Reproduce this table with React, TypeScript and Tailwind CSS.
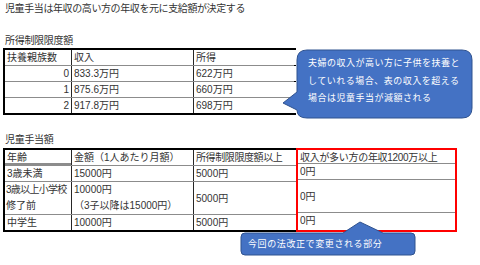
import { Fragment } from "react"

const font = "font-['Liberation_Sans','Noto_Sans_CJK_JP',sans-serif]"

const limits = [
  { n: "0", income: "833.3万円", shotoku: "622万円" },
  { n: "1", income: "875.6万円", shotoku: "660万円" },
  { n: "2", income: "917.8万円", shotoku: "698万円" },
]

function Cell({ children, className = "" }: { children?: React.ReactNode; className?: string }) {
  return <div className={`px-[2px] leading-[15px] whitespace-nowrap ${className}`}>{children}</div>
}

function LimitTable() {
  return (
    <div className="w-[293px] border-2 border-black bg-white">
      <div className="grid grid-cols-[66px_1px_121px_1px_102px] bg-[#8c8c8c] gap-y-px">
        <Cell className="bg-white h-[15px]">扶養親族数</Cell>
        <div className="bg-[#262626]" />
        <Cell className="bg-white">収入</Cell>
        <div className="bg-[#262626]" />
        <Cell className="bg-white">所得</Cell>
        {limits.map((r) => (
          <Fragment key={r.n}>
            <Cell className="bg-white h-[15px] text-right">{r.n}</Cell>
            <div className="bg-[#262626]" />
            <Cell className="bg-white">{r.income}</Cell>
            <div className="bg-[#262626]" />
            <Cell className="bg-white">{r.shotoku}</Cell>
          </Fragment>
        ))}
      </div>
    </div>
  )
}

function AllowanceTable() {
  const rowH = ["h-[13px]", "h-[15px]", "h-[32px]", "h-[15px]"]
  return (
    <div className="flex">
      <div className="w-[293px] border-2 border-r-0 border-black">
        <div className="grid grid-cols-[66px_1px_121px_1px_102px] bg-[#8c8c8c] gap-y-px">
          <Cell className={`bg-white ${rowH[0]} leading-[13px]`}>年齢</Cell>
          <div className="bg-[#262626]" />
          <Cell className="bg-white leading-[13px]">金額（1人あたり月額）</Cell>
          <div className="bg-[#262626]" />
          <Cell className="bg-white leading-[13px] tracking-[-0.4px]">所得制限限度額以上</Cell>

          <Cell className={`bg-white ${rowH[1]}`}>3歳未満</Cell>
          <div className="bg-[#262626]" />
          <Cell className="bg-white">15000円</Cell>
          <div className="bg-[#262626]" />
          <Cell className="bg-white">5000円</Cell>

          <div className={`bg-white ${rowH[2]} px-[1px] leading-[16px] whitespace-nowrap`}>
            <div className="tracking-[-0.7px]">3歳以上小学校</div>
            <div>修了前</div>
          </div>
          <div className="bg-[#262626]" />
          <div className="bg-white px-[2px] leading-[16px] whitespace-nowrap">
            <div>10000円</div>
            <div>（3子以降は15000円）</div>
          </div>
          <div className="bg-[#262626]" />
          <Cell className="bg-white flex items-center">5000円</Cell>

          <Cell className={`bg-white ${rowH[3]}`}>中学生</Cell>
          <div className="bg-[#262626]" />
          <Cell className="bg-white">10000円</Cell>
          <div className="bg-[#262626]" />
          <Cell className="bg-white">5000円</Cell>
        </div>
      </div>
      <div className="w-[161px] border-2 border-[#ff0000]">
        <div className="flex flex-col gap-y-px bg-[#8c8c8c]">
          <Cell className={`bg-white ${rowH[0]} leading-[13px] tracking-[-0.3px]`}>収入が多い方の年収1200万以上</Cell>
          <Cell className={`bg-white ${rowH[1]}`}>0円</Cell>
          <Cell className={`bg-white ${rowH[2]} flex items-center`}>0円</Cell>
          <Cell className={`bg-white ${rowH[3]}`}>0円</Cell>
        </div>
      </div>
    </div>
  )
}

export default function App() {
  return (
    <div className={`relative w-[480px] h-[265px] overflow-hidden bg-white text-[10px] text-[#333] ${font}`}>
      <div className="pl-[3px] pt-[2px]">
        <div className="h-[32px] pl-[2px] leading-[14px] tracking-[-0.4px]">
          児童手当は年収の高い方の年収を元に支給額が決定する
        </div>
        <div className="h-[14px] pl-[2px] leading-[14px] tracking-[-0.3px]">所得制限限度額</div>
        <LimitTable />
        <div className="mt-[18px] h-[15px] pl-[2px] leading-[14px] tracking-[-0.3px]">児童手当額</div>
        <AllowanceTable />
      </div>

      <div className="absolute left-[280px] top-[48px] w-[195px] h-[72px]">
        <svg width="195" height="72" className="absolute inset-0">
          <path
            d="M27 2H182Q192 2 192 12V60Q192 70 182 70H27Q17 70 17 62L3 55L17 44V12Q17 2 27 2Z"
            fill="#4472c4"
            stroke="#2f528f"
            strokeWidth="1"
          />
        </svg>
        <div className="absolute left-[28px] top-[7px] text-white text-[9px] leading-[17.5px] tracking-[0.5px] whitespace-nowrap">
          <div>夫婦の収入が高い方に子供を扶養と</div>
          <div>していれる場合、表の収入を超える</div>
          <div>場合は児童手当が減額される</div>
        </div>
      </div>

      <div className="absolute left-[238px] top-[219px] w-[180px] h-[38px]">
        <svg width="180" height="38" className="absolute inset-0">
          <path
            d="M7 14H105L122 3L145 14H173Q177 14 177 18V32Q177 36 173 36H7Q3 36 3 32V18Q3 14 7 14Z"
            fill="#4472c4"
            stroke="#2f528f"
            strokeWidth="1"
          />
        </svg>
        <div className="absolute left-[10px] top-[18px] text-white text-[9px] leading-[14px] tracking-[0.6px] whitespace-nowrap">
          今回の法改正で変更される部分
        </div>
      </div>
    </div>
  )
}
